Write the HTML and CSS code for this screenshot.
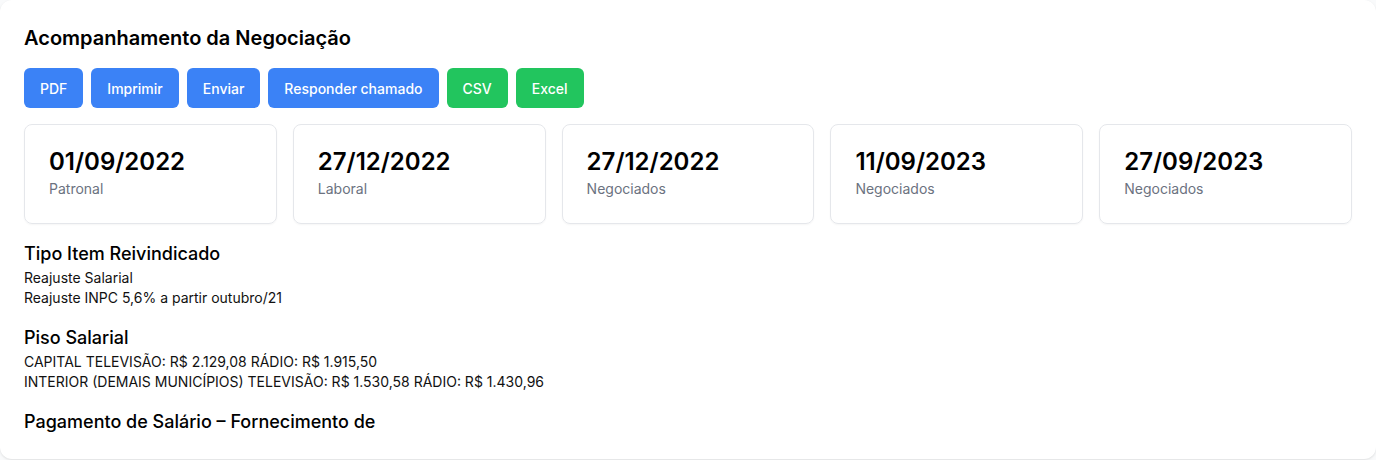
FILE: index.html
```html
<!DOCTYPE html>
<html lang="pt-BR">
<head>
<meta charset="utf-8">
<title>Acompanhamento da Negociação</title>
<link rel="stylesheet" href="styles.css">
</head>
<body>
<div class="panel">
  <h1 class="title">Acompanhamento da Negociação</h1>
  <div class="actions">
    <button class="btn btn-blue">PDF</button>
    <button class="btn btn-blue">Imprimir</button>
    <button class="btn btn-blue">Enviar</button>
    <button class="btn btn-blue">Responder chamado</button>
    <button class="btn btn-green">CSV</button>
    <button class="btn btn-green">Excel</button>
  </div>
  <div class="dates">
    <div class="date-card"><div class="date">01/09/2022</div><div class="date-label">Patronal</div></div>
    <div class="date-card"><div class="date">27/12/2022</div><div class="date-label">Laboral</div></div>
    <div class="date-card"><div class="date">27/12/2022</div><div class="date-label">Negociados</div></div>
    <div class="date-card"><div class="date">11/09/2023</div><div class="date-label">Negociados</div></div>
    <div class="date-card"><div class="date">27/09/2023</div><div class="date-label">Negociados</div></div>
  </div>
  <section class="item">
    <h2 class="item-title">Tipo Item Reivindicado</h2>
    <p class="item-line">Reajuste Salarial</p>
    <p class="item-line">Reajuste INPC 5,6% a partir outubro/21</p>
  </section>
  <section class="item">
    <h2 class="item-title">Piso Salarial</h2>
    <p class="item-line">CAPITAL TELEVISÃO: R$ 2.129,08 RÁDIO: R$ 1.915,50</p>
    <p class="item-line">INTERIOR (DEMAIS MUNICÍPIOS) TELEVISÃO: R$ 1.530,58 RÁDIO: R$ 1.430,96</p>
  </section>
  <section class="item">
    <h2 class="item-title">Pagamento de Salário – Fornecimento de</h2>
  </section>
</div>
</body>
</html>
```

FILE: styles.css
```css
* { box-sizing: border-box; }
html, body { margin: 0; padding: 0; }
body {
  background: #f9fafb;
  font-family: Inter, "Noto Sans", sans-serif;
  color: #111827;
  height: 460px;
  overflow: hidden;
}
.panel {
  background: #ffffff;
  border-radius: 12px;
  box-shadow: 0 1px 3px rgba(0,0,0,0.08), 0 1px 2px rgba(0,0,0,0.04);
  padding: 24px;
  height: 459px;
  overflow: hidden;
}
.title {
  margin: 0;
  font-size: 20px;
  line-height: 28px;
  font-weight: 600;
  color: #000;
}
.actions {
  display: flex;
  gap: 8px;
  margin-top: 16px;
}
.btn {
  border: none;
  border-radius: 6px;
  height: 40px;
  padding: 0 16px;
  font-family: inherit;
  font-size: 14px;
  font-weight: 500;
  color: #fff;
  cursor: pointer;
}
.btn-blue { background: #3b82f6; }
.btn-green { background: #22c55e; }
.dates {
  display: grid;
  grid-template-columns: repeat(5, 1fr);
  gap: 16px;
  margin-top: 16px;
}
.date-card {
  border: 1px solid #e5e7eb;
  border-radius: 8px;
  padding: 24px;
  box-shadow: 0 1px 2px rgba(0,0,0,0.04);
}
.date {
  font-size: 24px;
  line-height: 26px;
  font-weight: 600;
  color: #000;
}
.date-label {
  margin-top: 4px;
  font-size: 14px;
  line-height: 20px;
  color: #6b7280;
}
.item { margin-top: 16px; }
.item-title {
  margin: 0;
  font-size: 18px;
  line-height: 28px;
  font-weight: 500;
  color: #000;
}
.item-line {
  margin: 0;
  font-size: 14px;
  line-height: 20px;
  color: #111;
}
```
